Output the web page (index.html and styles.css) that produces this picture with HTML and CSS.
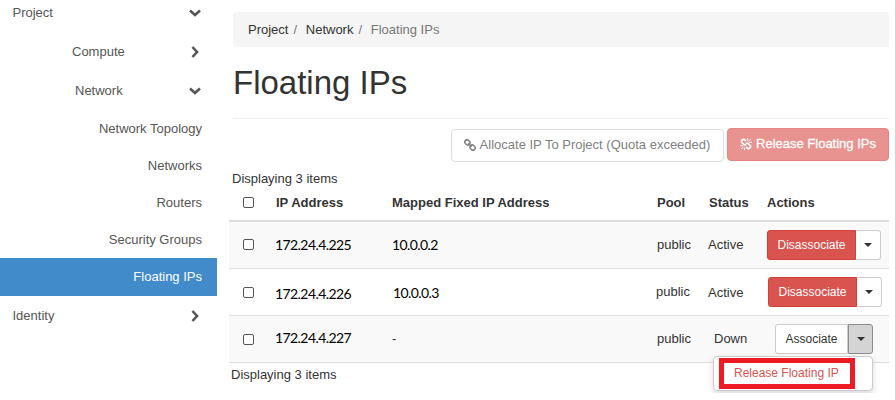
FILE: index.html
```html
<!DOCTYPE html>
<html lang="en">
<head>
<meta charset="utf-8">
<title>Floating IPs</title>
<link rel="stylesheet" href="styles.css">
</head>
<body>
<svg class="defs" width="0" height="0">
  <symbol id="down" viewBox="0 0 12 8"><path d="M1 1.500 6 6l5-4.500" fill="none" stroke="currentColor" stroke-width="2.600"/></symbol>
  <symbol id="right" viewBox="0 0 8 12"><path d="M1.500 1 6 6l-4.500 5" fill="none" stroke="currentColor" stroke-width="2.600"/></symbol>
  <symbol id="link" viewBox="0 0 12 12"><g fill="none" stroke="currentColor" stroke-width="1.500"><rect x="-2.700" y="-2.200" width="5.400" height="4.400" rx="2" transform="translate(3.400 3.400) rotate(45)"/><rect x="-2.700" y="-2.200" width="5.400" height="4.400" rx="2" transform="translate(8.600 8.600) rotate(45)"/><path d="m4.300 4.300 3.400 3.400"/></g></symbol>
  <symbol id="unlink" viewBox="0 0 12 12"><g fill="none" stroke="currentColor" stroke-width="1.700"><path d="M6 3 4.500 1.600Q3.300.8 2.200 1.900T1.700 4.300L4 6.500Q5 7.200 6 6.300M6 9l1.500 1.400q1.200.8 2.300-.3t.5-2.400L8 5.500q-1-.700-2 .2"/><path stroke-width="1" d="M7.500 0v2.500M8.500 3 11 1M9 4.300h3M4.500 12V9.500M3.500 9 1 11M3 7.700H0"/></g></symbol>
  <symbol id="caret" viewBox="0 0 8 4"><path d="M0 0h8L4 4z" fill="currentColor"/></symbol>
</svg>
<div class="page">
  <nav class="sidebar">
    <a class="item">Project<svg class="chev down"><use href="#down"/></svg></a>
    <a class="item compute">Compute<svg class="chev right"><use href="#right"/></svg></a>
    <a class="item network">Network<svg class="chev down"><use href="#down"/></svg></a>
    <a class="leaf">Network Topology</a>
    <a class="leaf">Networks</a>
    <a class="leaf">Routers</a>
    <a class="leaf">Security Groups</a>
    <a class="leaf active">Floating IPs</a>
    <a class="item identity">Identity<svg class="chev right"><use href="#right"/></svg></a>
  </nav>
  <main class="content">
    <div class="breadcrumb"><a>Project</a><i>/</i><a>Network</a><i>/</i><span>Floating IPs</span></div>
    <h1>Floating IPs</h1>
    <div class="toolbar">
      <button class="allocate"><svg class="glyph"><use href="#link"/></svg>Allocate IP To Project (Quota exceeded)</button>
      <button class="release"><svg class="glyph"><use href="#unlink"/></svg>Release Floating IPs</button>
    </div>
    <div class="count">Displaying 3 items</div>
    <div class="table">
      <div class="row head"><span class="check"></span><b>IP Address</b><b>Mapped Fixed IP Address</b><b>Pool</b><b>Status</b><b>Actions</b></div>
      <div class="row first">
        <span class="check"></span><span class="ip">172.24.4.225</span><span class="ip fixed">10.0.0.2</span><span>public</span><span class="status">Active</span>
        <div class="group"><button class="danger">Disassociate</button><button class="toggle"><svg class="caret"><use href="#caret"/></svg></button></div>
      </div>
      <div class="row second">
        <span class="check"></span><span class="ip">172.24.4.226</span><span class="ip fixed">10.0.0.3</span><span class="pool">public</span><span class="status">Active</span>
        <div class="group"><button class="danger">Disassociate</button><button class="toggle"><svg class="caret"><use href="#caret"/></svg></button></div>
      </div>
      <div class="row third">
        <span class="check"></span><span class="ip">172.24.4.227</span><span>-</span><span>public</span><span class="status">Down</span>
        <div class="group"><button class="associate">Associate</button><button class="toggle open"><svg class="caret"><use href="#caret"/></svg></button>
          <div class="menu"><div class="highlight">Release Floating IP</div></div>
        </div>
      </div>
    </div>
    <div class="count bottom">Displaying 3 items</div>
  </main>
</div>
</body>
</html>
```
FILE: styles.css
```css
* { box-sizing: border-box; }
body { margin: 0; background: #fff; color: #333; font: 13px/18px "Liberation Sans", Arial, sans-serif; overflow: hidden; }
.defs { position: absolute; }
.page { display: flex; height: 393px; overflow: hidden; }
.sidebar { width: 217px; color: #555; }
.item { display: flex; align-items: center; justify-content: space-between; height: 39px; padding: 0 16px 0 72px; }
.item:first-child { height: 32px; padding: 0 16px 7px 12.500px; }
.network { padding-left: 75px; }
.identity { padding-left: 12.500px; }
.leaf { display: block; height: 37px; padding-right: 15px; line-height: 37px; text-align: right; }
.active { height: 38px; background: #428bca; color: #fff; }
.chev { width: 12px; height: 8px; }
.chev.right { width: 8px; height: 12px; margin-right: 2px; }

.content { width: 660px; margin-left: 12px; }
.breadcrumb { display: flex; height: 35px; margin: 12px 0 0 4px; padding-left: 15px; align-items: center; background: #f5f5f5; border-radius: 4px 0 0 4px; color: #777; }
.breadcrumb a { color: #333; }
.breadcrumb i { width: 17.300px; padding-left: 5px; font-style: normal; }
h1 { height: 72px; margin: 0 0 0 4px; padding-top: 16px; border-bottom: 1px solid #eee; font-size: 33px; line-height: 40px; font-weight: 400; }
.toolbar { display: flex; height: 51px; padding-top: 9px; justify-content: flex-end; gap: 3px; }
button { display: flex; align-items: center; justify-content: center; padding: 0; font: inherit; border: 1px solid #ccc; background: #fff; color: #333; }
.toolbar button { height: 33px; border-radius: 4px; }
.toolbar .allocate { width: 273px; margin-top: 1px; padding: 0 1px 2px 0; border-color: #ddd; color: #808080; }
.toolbar .release { width: 162px; padding-bottom: 2px; background: #e8938f; border-color: #e68783; color: #fff; -webkit-text-stroke: .3px #fff; }
.glyph { width: 12px; height: 12px; margin-right: 4px; }
.count { height: 17px; padding-left: 3px; }
.bottom { padding-left: 2px; margin-top: 3px; }

.row { display: grid; grid-template-columns: 46px 117px 265px 52px 58px 122px; height: 47px; align-items: center; border-bottom: 1px solid #ddd; }
.head { height: 35px; padding-bottom: 2px; border-bottom-width: 2px; }
.head b:nth-child(2) { margin-left: 1px; }
.first, .third { background: #f9f9f9; }
.check { width: 11px; height: 11px; margin-left: 14px; border: 1px solid #555; border-radius: 2px; background: #fff; }
.first .check { margin-bottom: 2px; }
.ip { color: #000; font-family: Lato, "Liberation Sans", sans-serif; font-size: 14px; letter-spacing: -.58px; }
.first .fixed { margin-bottom: 1px; }
.second .ip:not(.fixed) { padding-top: 4px; }
.second .fixed { padding-top: 2px; }
.second .status { padding-top: 2px; }
.third .ip { padding-bottom: 2px; }
.group { position: relative; display: flex; font-size: 12px; }
.group button { height: 30px; }
.danger { width: 89px; background: #d9534f; border-color: #d43f3a; color: #fff; border-radius: 3px 0 0 3px; }
.toggle { width: 25px; border-left: 0; border-radius: 0 3px 3px 0; }
.associate { width: 73px; border-radius: 3px 0 0 3px; }
.toggle.open { background: #d4d4d4; border: 1px solid #8c8c8c; }
.caret { width: 8px; height: 4px; }
.first .status, .second .status { margin-left: -1px; }
.second .pool { margin-left: -1px; }
.second .group, .second .fixed { margin-left: 1px; }
.third .status { margin-left: 5px; }
.third .group { margin-left: 8px; }
.menu { position: absolute; z-index: 1; left: -62px; top: 32px; width: 160px; height: 35px; padding: 1px 0 0 5px; background: #fff; border: 1px solid #ccc; border-radius: 4px; box-shadow: 0 3px 6px rgba(0,0,0,.15); }
.highlight { width: 136px; height: 31px; padding-left: 10px; border: 5px solid #ed1c24; color: #d9534f; line-height: 20px; white-space: nowrap; }
```
